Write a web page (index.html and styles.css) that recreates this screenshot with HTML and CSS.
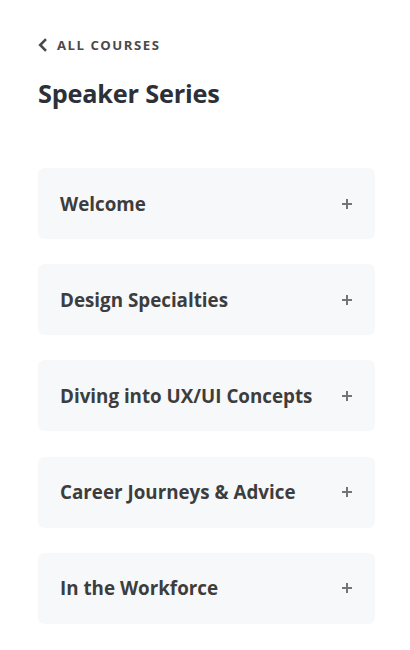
FILE: index.html
```html
<!DOCTYPE html>
<html>
<head>
<meta charset="utf-8">
<link rel="stylesheet" href="styles.css">
</head>
<body>
<div class="page">
  <a class="back" href="#">
    <svg class="chev" width="10" height="14" viewBox="0 0 10 14"><path d="M8 1.2 L2.2 7 L8 12.8" fill="none" stroke="#4a4a4a" stroke-width="2.6"/></svg>
    <span>ALL COURSES</span>
  </a>
  <h1 class="title">Speaker Series</h1>
  <div class="list">
    <div class="card"><span class="name">Welcome</span><svg class="plus" width="10" height="10" viewBox="0 0 10 10"><path d="M5 0 V10 M0 5 H10" stroke="#757575" stroke-width="2"/></svg></div>
    <div class="card"><span class="name">Design Specialties</span><svg class="plus" width="10" height="10" viewBox="0 0 10 10"><path d="M5 0 V10 M0 5 H10" stroke="#757575" stroke-width="2"/></svg></div>
    <div class="card"><span class="name">Diving into UX/UI Concepts</span><svg class="plus" width="10" height="10" viewBox="0 0 10 10"><path d="M5 0 V10 M0 5 H10" stroke="#757575" stroke-width="2"/></svg></div>
    <div class="card"><span class="name">Career Journeys &amp; Advice</span><svg class="plus" width="10" height="10" viewBox="0 0 10 10"><path d="M5 0 V10 M0 5 H10" stroke="#757575" stroke-width="2"/></svg></div>
    <div class="card"><span class="name">In the Workforce</span><svg class="plus" width="10" height="10" viewBox="0 0 10 10"><path d="M5 0 V10 M0 5 H10" stroke="#757575" stroke-width="2"/></svg></div>
  </div>
</div>
</body>
</html>
```
FILE: styles.css
```css
html, body { margin: 0; padding: 0; background: #fff; }
body { font-family: "Open Sans", "Liberation Sans", sans-serif; }
.page { padding: 36px 35px 0 38px; }
.back { display: flex; align-items: center; gap: 9px; text-decoration: none; color: #4a4a4a; font-size: 13.2px; font-weight: 700; letter-spacing: 1.5px; height: 18px; }
.chev { display: block; }
.title { margin: 22px 0 0; font-size: 25.3px; font-weight: 700; color: #2c3038; line-height: 34px; letter-spacing: -0.2px; }
.list { margin-top: 58px; display: flex; flex-direction: column; gap: 25.2px; }
.card { height: 71px; background: #f7f8fa; border-radius: 6px; display: flex; align-items: center; justify-content: space-between; padding: 0 23px 0 22px; box-sizing: border-box; }
.name { font-size: 18.8px; font-weight: 700; color: #3d3d3d; }
.plus { display: block; }
```
